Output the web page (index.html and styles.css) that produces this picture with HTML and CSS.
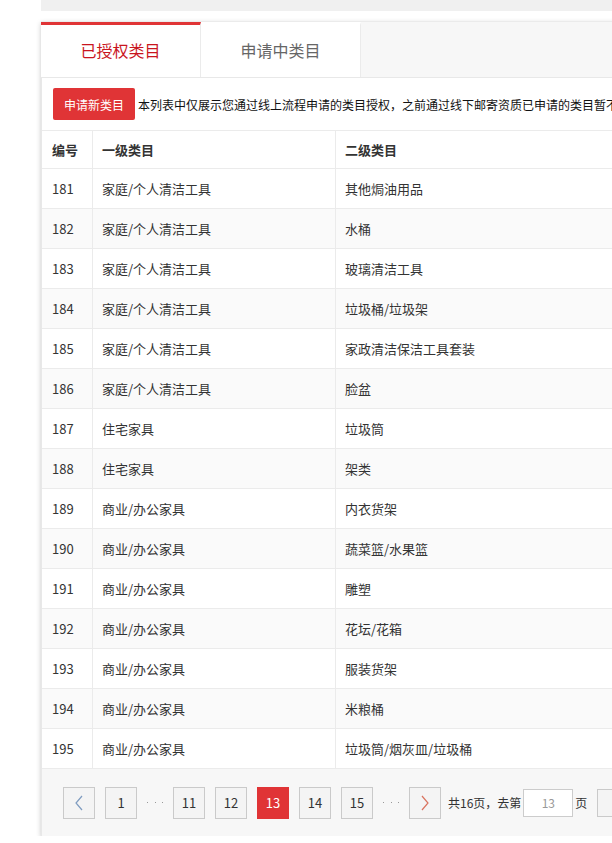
FILE: index.html
```html
<!DOCTYPE html>
<html>
<head>
  <meta charset="utf-8">
  <title>类目管理</title>
  <link rel="stylesheet" href="styles.css">
</head>
<body>
  <div class="page">
    <div class="topbar"></div>
    <div class="panel">
      <div class="tabs">
        <div class="tab active">已授权类目</div>
        <div class="tab">申请中类目</div>
      </div>
      <div class="content">
        <div class="toolbar">
          <button class="apply-button">申请新类目</button>
          <span class="notice">本列表中仅展示您通过线上流程申请的类目授权，之前通过线下邮寄资质已申请的类目暂不在此展示</span>
        </div>
        <table class="cat-table">
          <thead>
            <tr>
              <th class="col-no">编号</th>
              <th class="col-first">一级类目</th>
              <th>二级类目</th>
            </tr>
          </thead>
          <tbody>
            <tr><td>181</td><td>家庭/个人清洁工具</td><td>其他焗油用品</td></tr>
            <tr><td>182</td><td>家庭/个人清洁工具</td><td>水桶</td></tr>
            <tr><td>183</td><td>家庭/个人清洁工具</td><td>玻璃清洁工具</td></tr>
            <tr><td>184</td><td>家庭/个人清洁工具</td><td>垃圾桶/垃圾架</td></tr>
            <tr><td>185</td><td>家庭/个人清洁工具</td><td>家政清洁保洁工具套装</td></tr>
            <tr><td>186</td><td>家庭/个人清洁工具</td><td>脸盆</td></tr>
            <tr><td>187</td><td>住宅家具</td><td>垃圾筒</td></tr>
            <tr><td>188</td><td>住宅家具</td><td>架类</td></tr>
            <tr><td>189</td><td>商业/办公家具</td><td>内衣货架</td></tr>
            <tr><td>190</td><td>商业/办公家具</td><td>蔬菜篮/水果篮</td></tr>
            <tr><td>191</td><td>商业/办公家具</td><td>雕塑</td></tr>
            <tr><td>192</td><td>商业/办公家具</td><td>花坛/花箱</td></tr>
            <tr><td>193</td><td>商业/办公家具</td><td>服装货架</td></tr>
            <tr><td>194</td><td>商业/办公家具</td><td>米粮桶</td></tr>
            <tr><td>195</td><td>商业/办公家具</td><td>垃圾筒/烟灰皿/垃圾桶</td></tr>
          </tbody>
        </table>
        <div class="pager">
          <a class="page-btn prev">
            <svg width="10" height="16" viewBox="0 0 10 16"><path d="M8 1 L2 8 L8 15" fill="none" stroke="#7f9cc0" stroke-width="1.2"/></svg>
          </a>
          <a class="page-btn">1</a>
          <span class="dots"><i></i><i></i><i></i></span>
          <a class="page-btn">11</a>
          <a class="page-btn">12</a>
          <a class="page-btn current">13</a>
          <a class="page-btn">14</a>
          <a class="page-btn">15</a>
          <span class="dots"><i></i><i></i><i></i></span>
          <a class="page-btn next">
            <svg width="10" height="16" viewBox="0 0 10 16"><path d="M2 1 L8 8 L2 15" fill="none" stroke="#d9735f" stroke-width="1.2"/></svg>
          </a>
          <span class="total">共16页，去第</span>
          <input class="jump-input" type="text" value="13">
          <span class="unit">页</span>
          <a class="page-btn go">确定</a>
        </div>
      </div>
    </div>
  </div>
</body>
</html>
```

FILE: styles.css
```css
* {
  box-sizing: border-box;
  margin: 0;
  padding: 0;
}

html, body {
  overflow: hidden;
}

body {
  font-family: "Microsoft YaHei", "Noto Sans CJK SC", sans-serif;
  background-color: #fff;
  color: #333;
}

.page {
  width: 1000px;
  padding-left: 41px;
}

.topbar {
  height: 11px;
  background-color: #f0f0f0;
  margin-bottom: 10px;
}

.panel {
  background-color: #fff;
  box-shadow: 0 2px 5px rgba(0, 0, 0, 0.22);
}

.tabs {
  display: flex;
  height: 56px;
  background-color: #f7f7f7;
  border-top: 1px solid #ebebeb;
}

.tab {
  width: 160px;
  background-color: #fff;
  border-right: 1px solid #ebebeb;
  border-top: 3px solid #fff;
  display: flex;
  align-items: center;
  justify-content: center;
  font-size: 16px;
  color: #666;
  padding-bottom: 2px;
}

.tab.active {
  width: 160px;
  border-top-color: #e03436;
  color: #c9151e;
}

.content {
  border-top: 1px solid #e8e8e8;
  border-left: 1px solid #e8e8e8;
}

.toolbar {
  display: flex;
  align-items: center;
  padding: 10px 11px;
  height: 52px;
}

.apply-button {
  width: 82px;
  height: 32px;
  background-color: #e03436;
  color: #fff;
  border: none;
  border-radius: 2px;
  font-family: inherit;
  font-size: 12px;
  margin-right: 3px;
}

.notice {
  font-size: 12px;
  color: #111;
  white-space: nowrap;
}

.cat-table {
  width: 100%;
  border-collapse: separate;
  border-spacing: 0;
  font-size: 13px;
  border-top: 1px solid #ebebeb;
}

.cat-table th,
.cat-table td {
  text-align: left;
  line-height: 19px;
  border-bottom: 1px solid #ebebeb;
  border-right: 1px solid #ebebeb;
  white-space: nowrap;
}

.cat-table th {
  font-weight: bold;
  color: #333;
  padding: 9px;
}

.cat-table td {
  padding: 10px 9px;
  color: #333;
}

.cat-table th:first-child,
.cat-table td:first-child {
  padding-left: 10px;
}

.cat-table tbody tr:nth-child(even) td {
  background-color: #fafafa;
}

.col-no {
  width: 51px;
}

.col-first {
  width: 243px;
}

.pager {
  display: flex;
  align-items: center;
  height: 67px;
  padding: 0 21px;
  background-color: #f7f7f7;
  font-size: 12px;
}

.page-btn {
  width: 32px;
  height: 32px;
  display: flex;
  align-items: center;
  justify-content: center;
  background-color: #f4f4f4;
  border: 1px solid #cacaca;
  font-size: 13px;
  color: #333;
  margin-right: 10px;
}

.page-btn.current {
  background-color: #e03436;
  border-color: #e03436;
  color: #fff;
}

.dots {
  width: 16px;
  margin-right: 10px;
  display: flex;
  justify-content: space-between;
}

.dots i {
  width: 1px;
  height: 1px;
  background-color: #999;
}

.next {
  margin-right: 7px;
}

.total {
  color: #333;
  margin-right: 2px;
}

.jump-input {
  width: 50px;
  height: 28px;
  border: 1px solid #cccccc;
  background-color: #fff;
  text-align: center;
  font-family: inherit;
  font-size: 12px;
  color: #999;
  margin-right: 2px;
}

.unit {
  margin-right: 10px;
}

.go {
  width: 60px;
  height: 28px;
  font-size: 12px;
}
```
